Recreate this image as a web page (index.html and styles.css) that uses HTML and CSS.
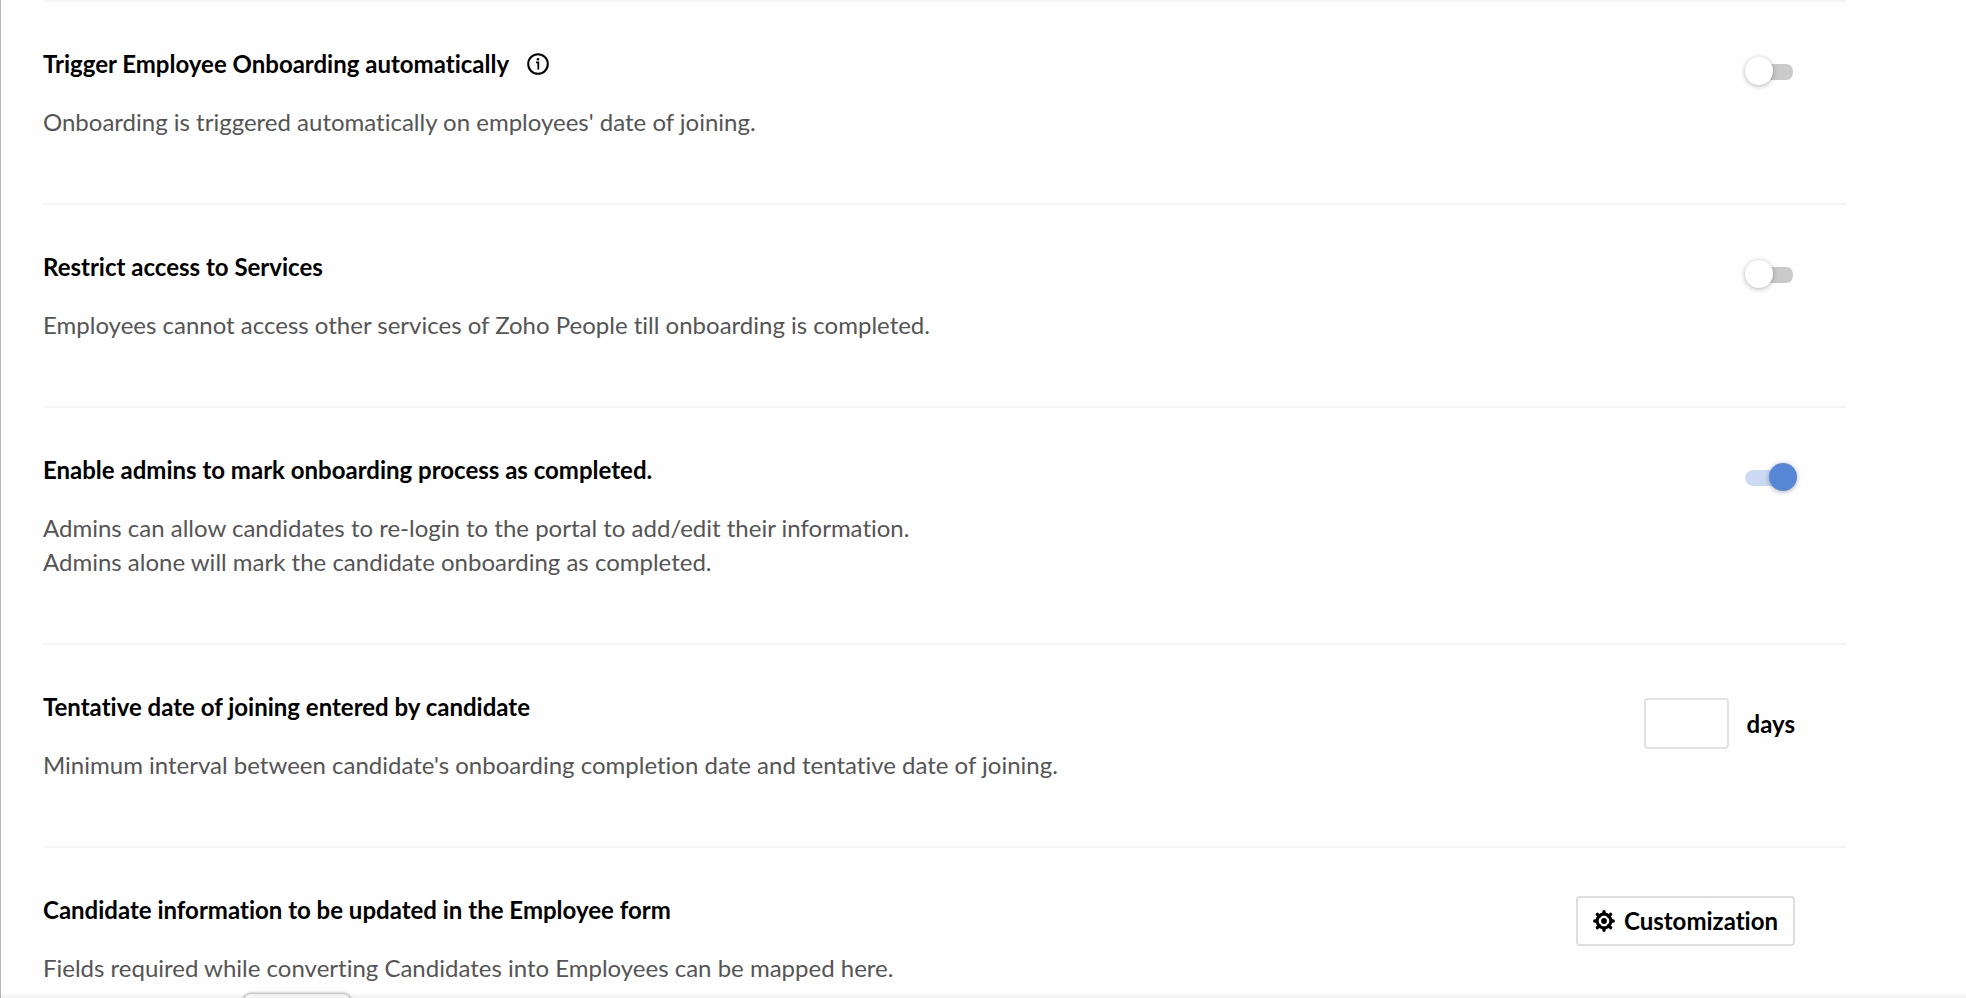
FILE: index.html
```html
<!DOCTYPE html>
<html lang="en">
<head>
  <meta charset="UTF-8">
  <title>Onboarding Settings</title>
  <link rel="stylesheet" href="styles.css">
</head>
<body>
  <main class="settings">
    <section class="setting">
      <div class="setting-text">
        <h2 class="setting-title">
          <label for="trigger">Trigger Employee Onboarding automatically</label>
          <svg class="info-icon" viewBox="0 0 22 22" aria-hidden="true">
            <circle cx="11" cy="11" r="9.8" fill="none" stroke="#000" stroke-width="2"/>
            <circle cx="11" cy="6.2" r="1.3"/>
            <path d="M9 9.4h2.3v7" fill="none" stroke="#000" stroke-width="1.8"/>
          </svg>
        </h2>
        <p class="setting-desc">Onboarding is triggered automatically on employees' date of joining.</p>
      </div>
      <input type="checkbox" class="switch" id="trigger">
    </section>

    <section class="setting">
      <div class="setting-text">
        <h2 class="setting-title"><label for="restrict">Restrict access to Services</label></h2>
        <p class="setting-desc">Employees cannot access other services of Zoho People till onboarding is completed.</p>
      </div>
      <input type="checkbox" class="switch" id="restrict">
    </section>

    <section class="setting">
      <div class="setting-text">
        <h2 class="setting-title"><label for="complete">Enable admins to mark onboarding process as completed.</label></h2>
        <p class="setting-desc">Admins can allow candidates to re-login to the portal to add/edit their information.<br>Admins alone will mark the candidate onboarding as completed.</p>
      </div>
      <input type="checkbox" class="switch" id="complete" checked>
    </section>

    <section class="setting">
      <div class="setting-text">
        <h2 class="setting-title">Tentative date of joining entered by candidate</h2>
        <p class="setting-desc">Minimum interval between candidate's onboarding completion date and tentative date of joining.</p>
      </div>
      <div class="days">
        <input type="text" class="days-input" id="days">
        <label for="days">days</label>
      </div>
    </section>

    <section class="setting">
      <div class="setting-text">
        <h2 class="setting-title">Candidate information to be updated in the Employee form</h2>
        <p class="setting-desc">Fields required while converting Candidates into Employees can be mapped here.</p>
      </div>
      <button type="button" class="btn">
        <svg class="gear-icon" viewBox="0 0 22 22" aria-hidden="true">
          <circle cx="11" cy="11" r="6.9" fill="none" stroke="#000" stroke-width="3"/>
          <circle cx="11" cy="11" r="2.9"/>
          <path d="M11 1.8v2M11 18.2v2M1.8 11h2M18.2 11h2M4.4 4.4l2 2M15.6 15.6l2 2M17.6 4.4l-2 2M6.4 15.6l-2 2" stroke="#000" stroke-width="3.4" stroke-linecap="round"/>
        </svg>
        Customization
      </button>
    </section>
  </main>

  <div class="bottom-bar"><div class="bottom-tab"></div></div>
</body>
</html>
```
FILE: styles.css
```css
* {
  box-sizing: border-box;
}
body {
  margin: 0;
  background: #fefefe;
  color: #000;
  font-family: Lato, sans-serif;
  font-size: 24px;
  line-height: 34px;
  font-variant-ligatures: none;
}
.settings {
  min-height: 100vh;
  padding: 0 120px 0 42px;
  border-left: 1px solid #b9b8c0;
}
.setting {
  display: flex;
  justify-content: space-between;
  align-items: flex-start;
  padding: 45px 51px 64px 0;
  border-top: 2px solid #f5f5f5;
}
.setting:last-child {
  padding-bottom: 0;
}
.setting-title {
  display: flex;
  align-items: center;
  gap: 18px;
  margin: 0 0 24px;
  font-size: 24px;
  font-weight: 700;
}
.setting-desc {
  margin: 0;
  color: #555;
}
.info-icon {
  width: 22px;
  height: 22px;
}

/* toggle switch */
.switch {
  appearance: none;
  position: relative;
  width: 50px;
  height: 16px;
  margin: 17px 0 0;
  border-right: 2px solid transparent;
  border-radius: 8px;
  background: #cacaca;
  background-clip: padding-box;
  cursor: pointer;
}
.switch::before {
  content: "";
  position: absolute;
  top: -7px;
  left: 0;
  width: 28px;
  height: 28px;
  border-radius: 50%;
  background: #fff;
  box-shadow: 0 1px 5px rgba(0, 0, 0, 0.3);
}
.switch:checked {
  background-color: #cbdaf2;
}
.switch:checked::before {
  left: 24px;
  background: #5687d6;
}

.days {
  display: flex;
  align-items: center;
  gap: 18px;
  margin-top: 8px;
  font-weight: 700;
}
.days-input {
  width: 85px;
  height: 51px;
  padding: 0 12px;
  border: 2px solid #e2e2e2;
  border-radius: 4px;
  background: #fff;
  font: inherit;
}
.btn {
  display: flex;
  align-items: center;
  gap: 9px;
  height: 50px;
  margin-top: 3px;
  padding: 0 15px;
  border: 2px solid #dedede;
  border-radius: 4px;
  background: #fff;
  color: #000;
  font: inherit;
  font-weight: 700;
  cursor: pointer;
}
.gear-icon {
  width: 22px;
  height: 22px;
}

/* bar peeking in from the bottom edge */
.bottom-bar {
  position: fixed;
  left: 0;
  right: 0;
  bottom: 0;
  height: 5px;
  padding-left: 243px;
  overflow: clip;
  overflow-clip-margin: 4px;
  background: linear-gradient(rgba(0, 0, 0, 0), rgba(0, 0, 0, 0.05));
}
.bottom-tab {
  width: 108px;
  height: 16px;
  border: 1px solid #c4c4c4;
  border-radius: 8px;
  background: #f3f3f3;
  box-shadow: 0 0 3px rgba(0, 0, 0, 0.3);
}
```
